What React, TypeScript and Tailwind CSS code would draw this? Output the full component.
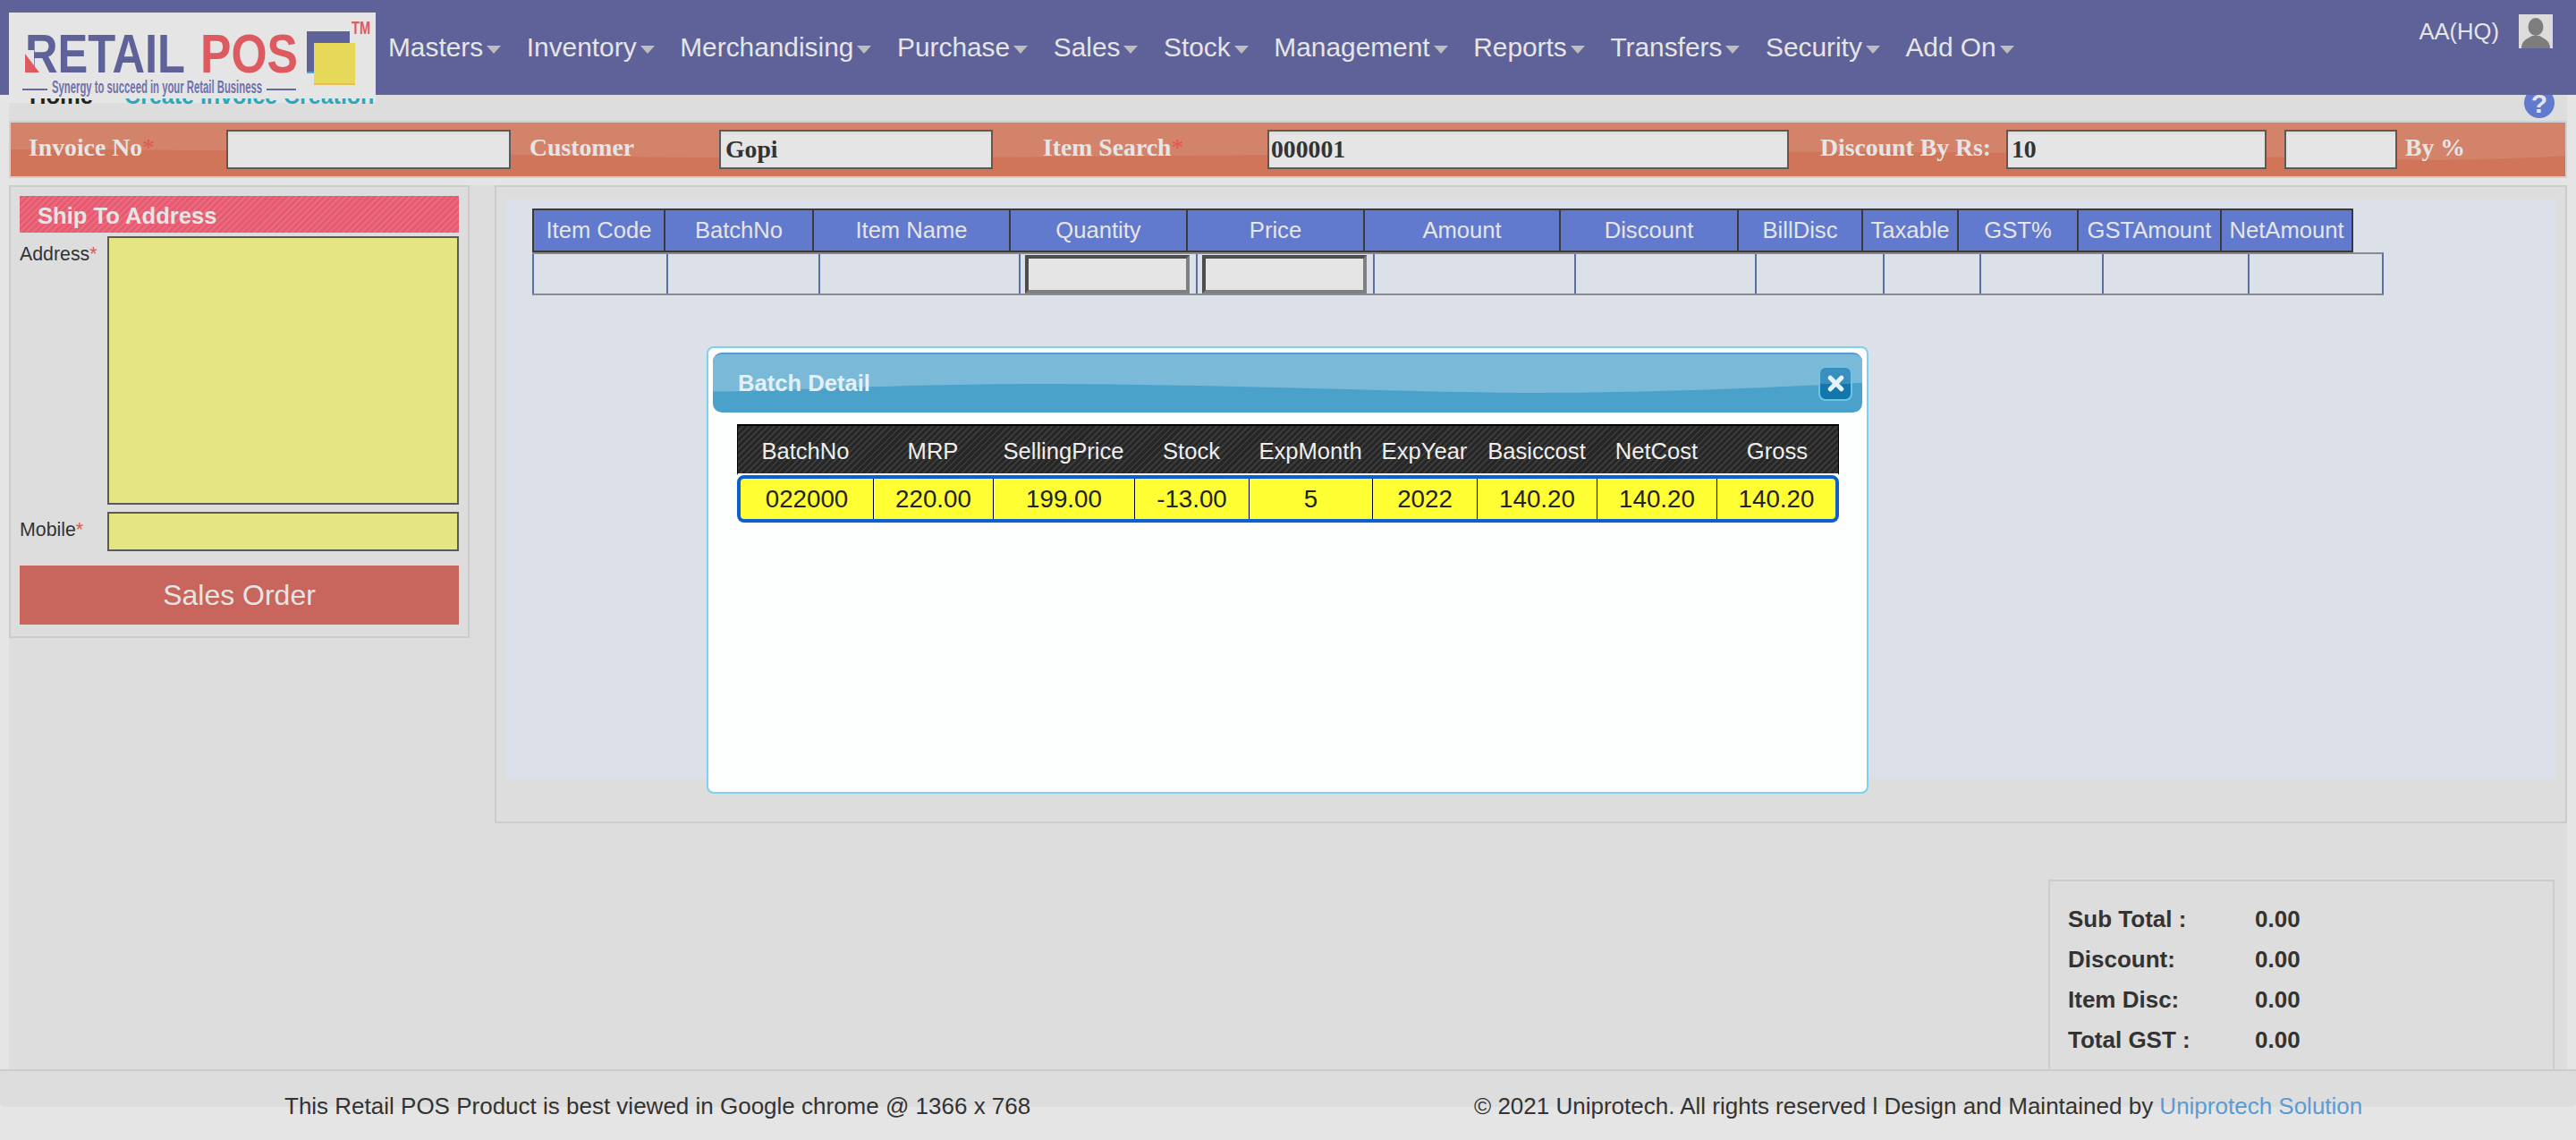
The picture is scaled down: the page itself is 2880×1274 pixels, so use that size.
import React from "react";
import { X } from "lucide-react";

const menu = ["Masters", "Inventory", "Merchandising", "Purchase", "Sales", "Stock", "Management", "Reports", "Transfers", "Security", "Add On"];
const headCols = ["Item Code", "BatchNo", "Item Name", "Quantity", "Price", "Amount", "Discount", "BillDisc", "Taxable", "GST%", "GSTAmount", "NetAmount"];
const batchHead = ["BatchNo", "MRP", "SellingPrice", "Stock", "ExpMonth", "ExpYear", "Basiccost", "NetCost", "Gross"];
const batchRow = ["022000", "220.00", "199.00", "-13.00", "5", "2022", "140.20", "140.20", "140.20"];
const totals = ["Sub Total :", "Discount:", "Item Disc:", "Total GST :"];
const rowCells = [0, 1, 2, 3, 4, 5, 6, 7, 8, 9, 10, 11];

function Logo() {
  return (
    <div className="w-[410px] h-[96px] mt-[14px] shrink-0 bg-[#e5e5e5] relative z-10 self-start">
      <svg viewBox="0 0 410 96" className="w-full h-full block">
        <g transform="translate(18,67) scale(1,1.42)">
          <text x="0" y="0" textLength="179" lengthAdjust="spacingAndGlyphs" fontSize="43" fontWeight="700" fontFamily="Liberation Sans, sans-serif" fill="#5f6199">RETAIL</text>
        </g>
        <rect x="17" y="42" width="11" height="26" fill="#e5e5e5" />
        <polygon points="18,46 34,67 18,67" fill="#dd5a60" />
        <g transform="translate(214,67) scale(1,1.42)">
          <text x="0" y="0" textLength="109" lengthAdjust="spacingAndGlyphs" fontSize="43" fontWeight="700" fontFamily="Liberation Sans, sans-serif" fill="#dd5a60">POS</text>
        </g>
        <rect x="333" y="21" width="48" height="47" fill="#5f6199" />
        <rect x="333" y="66" width="10" height="2" fill="#45a8d8" />
        <rect x="341" y="34" width="46" height="47" fill="#e6d95a" />
        <rect x="341" y="79" width="46" height="2" fill="#e8bd62" />
        <text x="383" y="24" textLength="21" lengthAdjust="spacingAndGlyphs" fontSize="20" fontWeight="700" fontFamily="Liberation Sans, sans-serif" fill="#dd5a60">TM</text>
        <line x1="15" y1="86" x2="43" y2="86" stroke="#6668a2" strokeWidth="2" />
        <text x="48" y="90" textLength="235" lengthAdjust="spacingAndGlyphs" fontSize="20" fontWeight="700" fontFamily="Liberation Sans, sans-serif" fill="#7072ab">Synergy to succeed in your Retail Business</text>
        <line x1="288" y1="86" x2="321" y2="86" stroke="#6668a2" strokeWidth="2" />
      </svg>
    </div>
  );
}

function Star() {
  return <span className="text-[#e2574c] font-normal">*</span>;
}

function Wave({ d, fill }: { d: string; fill: string }) {
  return (
    <svg viewBox="0 0 1000 100" preserveAspectRatio="none" className="absolute inset-0 w-full h-full">
      <path d={d} fill={fill} />
    </svg>
  );
}

const barInput = "h-[44px] border-2 border-[#5a5a5a] bg-[#e5e5e5] shadow-[inset_0_3px_0_#dedede] text-[27.73px] font-bold text-[#333] outline-none shrink-0 font-['Liberation_Serif',serif]";
const barLabel = "shrink-0 text-[27.73px] font-bold text-[#e5e5e5] leading-none relative -top-[2px] whitespace-nowrap";

export default function App() {
  return (
    <div className="relative w-[2880px] h-[1274px] overflow-hidden bg-[#e5e5e5] font-['Liberation_Sans',Arial,sans-serif] text-[#333]">
      {/* Navbar */}
      <header className="relative z-20 h-[106px] bg-[#5f6199] flex pl-[10px]">
        <Logo />
        <nav className="flex items-center ml-[14px] text-[29.87px] text-[#e5e5e5]">
          {menu.map((m) => (
            <div key={m} className="flex items-center mr-[28.6px]">
              <span>{m}</span>
              <span className="ml-[4px] mt-[4px] w-0 h-0 border-x-[8px] border-x-transparent border-t-[9px] border-t-[#bdbdbd]" />
            </div>
          ))}
        </nav>
        <div className="ml-auto flex items-start pt-[16px] pr-[26px] gap-[22px]">
          <span className="text-[25.6px] leading-[38px] text-[#e5e5e5]">AA(HQ)</span>
          <svg width="38" height="38" viewBox="0 0 38 38" className="block">
            <rect width="38" height="38" fill="#dcdcdc" />
            <ellipse cx="19" cy="14" rx="8.5" ry="10" fill="#7d7d7d" />
            <path d="M3 38 C3 29 10 27 15 24 L23 24 C28 27 35 29 35 38 Z" fill="#7d7d7d" />
          </svg>
        </div>
      </header>

      {/* Content */}
      <main className="ml-[10px] w-[2860px]">
        <div className="relative h-[29px] bg-[#dddddd]">
          <div className="absolute left-0 top-[4px] w-[410px] h-[5px] bg-[#e5e5e5]" />
          <div className="absolute left-[23px] -top-[15px] flex text-[25.6px] leading-[32px] font-bold whitespace-nowrap">
            <span className="text-[#222]">Home</span>
            <span className="ml-[35px] text-[#2ba6bb] text-[25px]">Create Invoice Creation</span>
          </div>
          <div className="absolute right-[14px] -top-[8px] w-[34px] h-[34px] rounded-full bg-[#617ace] flex items-center justify-center text-[30px] font-bold text-[#e5e5e5]">?</div>
        </div>

        <section className="relative h-[64px] border-2 border-[#d0d0d0] bg-[#d0745a] flex items-center pl-[20px] font-['Liberation_Serif',serif]">
          <Wave d="M0 0 H1000 V62 C960 72 940 70 900 66 C800 54 700 52 600 56 C450 62 350 68 250 64 C150 56 80 50 0 50 Z" fill="#d4836b" />
          <div className="relative flex items-center">
            <label className={`${barLabel} w-[221px]`}>Invoice No<Star /></label>
            <input readOnly className={`${barInput} w-[318px] px-[4px]`} />
            <label className={`${barLabel} ml-[21px] w-[212px]`}>Customer</label>
            <input readOnly defaultValue="Gopi" className={`${barInput} w-[306px] px-[5px]`} />
            <label className={`${barLabel} ml-[56px] w-[251px]`}>Item Search<Star /></label>
            <input readOnly defaultValue="000001" className={`${barInput} w-[583px] px-[2px]`} />
            <label className={`${barLabel} ml-[35px] w-[208px]`}>Discount By Rs:</label>
            <input readOnly defaultValue="10" className={`${barInput} w-[291px] px-[4px]`} />
            <input readOnly className={`${barInput} ml-[20px] w-[126px] px-[4px]`} />
            <label className={`${barLabel} ml-[9px]`}>By %</label>
          </div>
        </section>

        <div className="h-[8px]" />

        <div className="bg-[#dddddd] h-[990px] flex items-start">
          {/* Left panel */}
          <aside className="w-[515px] h-[506px] shrink-0 border-2 border-[#cccccc] p-[10px] mr-[28px]">
            <h2 className="h-[41px] pl-[20px] text-[25.6px] font-bold leading-[44px] text-[#e5e5e5] bg-[#e85a70] bg-[repeating-linear-gradient(135deg,#e85a70_0px,#e85a70_3px,#e96c80_3px,#e96c80_5px)]">Ship To Address</h2>
            <div className="grid grid-cols-[98px_393px] mt-[4px]">
              <label className="text-[21.33px] leading-none pt-[10px]">Address<Star /></label>
              <textarea readOnly className="w-[393px] h-[300px] block border-2 border-[#5a5a5a] bg-[#e5e583] resize-none outline-none" />
              <label className="text-[21.33px] leading-none mt-[8px] pt-[10px]">Mobile<Star /></label>
              <input readOnly className="w-[393px] h-[44px] mt-[8px] border-2 border-[#5a5a5a] bg-[#e5e583] outline-none" />
            </div>
            <button className="mt-[16px] w-full h-[66px] bg-[#c8655d] text-[32px] text-[#e5e5e5]">Sales Order</button>
          </aside>

          {/* Right column */}
          <div className="flex-1 min-w-0">
            <section className="h-[713px] border-2 border-[#cccccc] pt-[14px] pl-[11px] pr-[10px]">
              <div className="h-[646px] bg-[#dce0e8] pt-[10px] pl-[29px]">
                <div className="w-[2036px] h-[49px] grid grid-cols-[145px_166px_220px_198px_198px_219px_199px_139px_107px_134px_160px_147px] border-2 border-[#3a3a3a] bg-[#617ace] text-[25.6px] text-[#e5e5e5]">
                  {headCols.map((h, i) => (
                    <div key={h} className={`flex items-center justify-center whitespace-nowrap ${i === 0 ? "" : "border-l-2 border-[#3a3a3a]"}`}>{h}</div>
                  ))}
                </div>
                <div className="w-[2070px] h-[48px] grid grid-cols-[150px_170px_224px_198px_198px_225px_202px_143px_108px_137px_163px_150px] border-y-2 border-[#8a8a8a] border-r-2 border-r-[#5b6fa3]">
                  {rowCells.map((i) => (
                    <div key={i} className="border-l-2 border-[#5b6fa3] flex items-end justify-center pr-[2px]">
                      {(i === 3 || i === 4) && (
                        <input readOnly className="w-[184px] h-[43px] bg-[#e5e5e5] border-4 border-t-[#4d4d4d] border-l-[#4d4d4d] border-r-[#808080] border-b-[#808080] outline-none" />
                      )}
                    </div>
                  ))}
                </div>
              </div>
            </section>
            <div className="ml-auto mt-[63px] mr-[14px] w-[566px] h-[300px] border-2 border-[#cccccc] pt-[20px] pl-[20px]">
              {totals.map((t) => (
                <div key={t} className="flex h-[45px] items-center text-[26px] font-bold">
                  <span className="w-[209px]">{t}</span>
                  <span>0.00</span>
                </div>
              ))}
            </div>
          </div>
        </div>
      </main>

      {/* Modal */}
      <div className="absolute z-10 left-[790px] top-[387px] w-[1299px] h-[500px] border-2 border-[#7ed0ef] rounded-[8px] bg-[#fdfefe] pt-[5px] px-[5px]">
        <div className="relative h-[67px] overflow-hidden rounded-[10px] border-t-2 border-[#4f9fd6] bg-[#4aa2cb]">
          <Wave d="M0 0 H1000 V49 C900 60 800 66 720 66 C600 66 450 50 260 51 C150 52 80 62 0 64 Z" fill="#7ab9d8" />
          <div className="relative flex items-center h-full pl-[28px] pr-[11px]">
            <span className="text-[25.6px] font-bold text-[#e3f0f7]">Batch Detail</span>
            <div className="ml-auto w-[38px] h-[39px] rounded-[8px] border-2 border-[#6cc3e8] bg-[linear-gradient(#3a8fbe_50%,#1477ab_50%)] flex items-center justify-center">
              <X size={25} strokeWidth={5} color="#e6f4fa" />
            </div>
          </div>
        </div>
        <div className="ml-[27px] mt-[13px] w-[1232px]">
          <div className="h-[57px] grid grid-cols-[151px_134px_158px_128px_138px_117px_134px_134px_136px] border-t-2 border-x border-black bg-[#2b2b2b] bg-[repeating-linear-gradient(135deg,#262626_0px,#262626_3px,#3b3b3b_3px,#3b3b3b_5px)] text-[25.6px] text-[#eeeeee] border-b-2 border-b-white">
            {batchHead.map((h) => (
              <div key={h} className="flex items-center justify-center whitespace-nowrap pt-[3px]">{h}</div>
            ))}
          </div>
          <div className="h-[53px] grid grid-cols-[148px_134px_158px_128px_138px_117px_134px_134px_133px] border-[4px] border-[#0b60cc] rounded-[8px] bg-[#ffff33] text-[27.73px] text-[#222]">
            {batchRow.map((c, i) => (
              <div key={i} className={`flex items-center justify-center ${i === 0 ? "" : "border-l border-black"}`}>{c}</div>
            ))}
          </div>
        </div>
      </div>

      {/* Footer */}
      <footer className="absolute z-10 left-0 bottom-0 w-full h-[79px] bg-[#e5e5e5]">
        <div className="h-[42px] bg-[#dddddd] border-t-2 border-[#cccccc] rounded-b-[6px]" />
        <div className="relative -mt-[21px] flex text-[26px] leading-[40px] text-[#333]">
          <span className="ml-[318px]">This Retail POS Product is best viewed in Google chrome @ 1366 x 768</span>
          <span className="absolute left-[1648px] whitespace-nowrap">© 2021 Uniprotech. All rights reserved l Design and Maintained by <span className="text-[#5b9bd5]">Uniprotech Solution</span></span>
        </div>
      </footer>
    </div>
  );
}
